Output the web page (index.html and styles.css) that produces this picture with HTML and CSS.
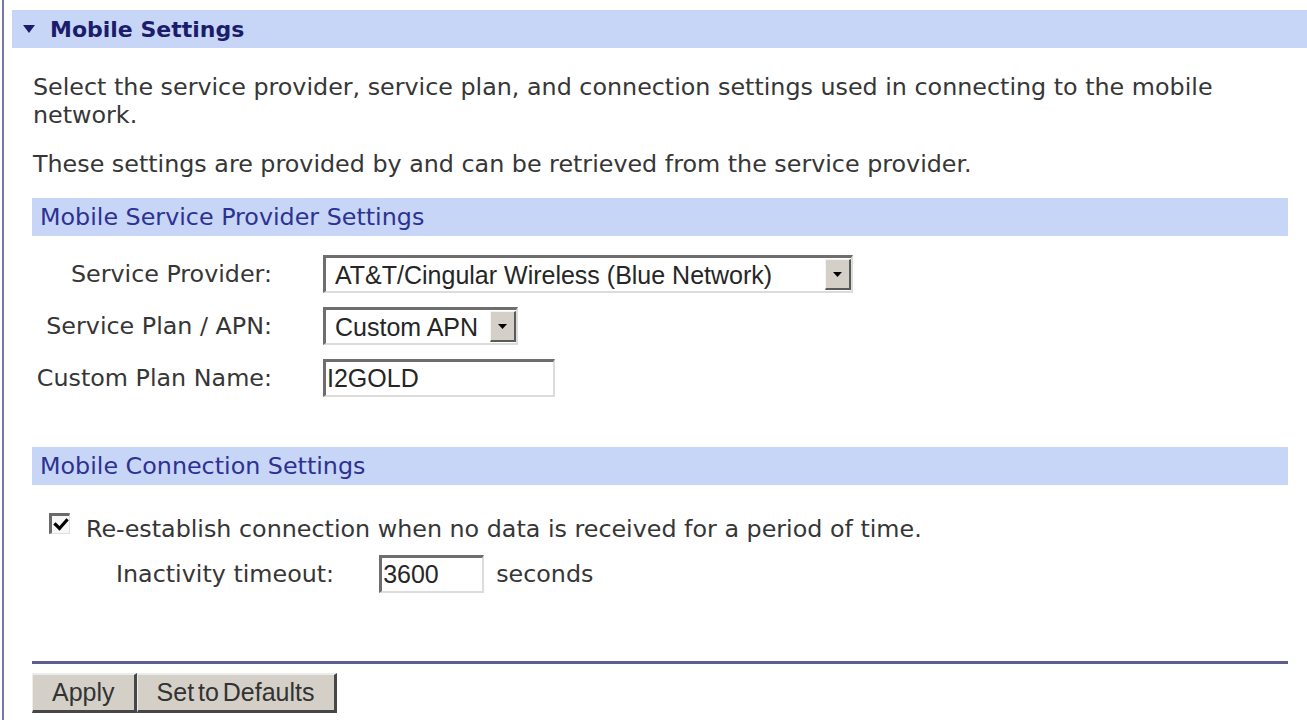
FILE: index.html
```html
<!DOCTYPE html>
<html lang="en">
<head>
<meta charset="utf-8">
<title>Mobile Settings</title>
<link rel="stylesheet" href="styles.css">
</head>
<body>
<div class="frame">
  <div class="titlebar">
    <svg class="caret" width="12" height="8" viewBox="0 0 12 8" aria-hidden="true"><polygon points="0,0 12,0 6,8" fill="#1c1c6c"/></svg>
    <span>Mobile Settings</span>
  </div>
  <div class="content">
    <p class="intro">Select the service provider, service plan, and connection settings used in connecting to the mobile network.</p>
    <p class="note">These settings are provided by and can be retrieved from the service provider.</p>

    <div class="section-head">Mobile Service Provider Settings</div>
    <div class="form-grid">
      <label for="provider">Service Provider:</label>
      <div class="field-select w-provider">
        <select id="provider"><option>AT&amp;T/Cingular Wireless (Blue Network)</option></select>
        <span class="dd-btn"><svg width="9" height="5" viewBox="0 0 9 5" aria-hidden="true"><polygon points="0,0 9,0 4.5,5" fill="#000"/></svg></span>
      </div>
      <label for="plan">Service Plan / APN:</label>
      <div class="field-select w-plan">
        <select id="plan"><option>Custom APN</option></select>
        <span class="dd-btn"><svg width="9" height="5" viewBox="0 0 9 5" aria-hidden="true"><polygon points="0,0 9,0 4.5,5" fill="#000"/></svg></span>
      </div>
      <label for="planname">Custom Plan Name:</label>
      <input id="planname" class="field-text w-name" type="text" value="I2GOLD">
    </div>

    <div class="section-head">Mobile Connection Settings</div>
    <div class="check-row">
      <span class="cb"><svg width="16" height="14" viewBox="0 0 16 14" aria-hidden="true"><path d="M2.5 6.5 L6.5 10.5 L13.5 2.5" fill="none" stroke="#000" stroke-width="3.2" stroke-linecap="square"/></svg></span>
      <span>Re-establish connection when no data is received for a period of time.</span>
    </div>
    <div class="timeout-row">
      <label for="timeout">Inactivity timeout:</label>
      <input id="timeout" class="field-text w-timeout" type="text" value="3600">
      <span class="unit">seconds</span>
    </div>

    <div class="rule"></div>
    <div class="buttons">
      <button class="btn" type="button">Apply</button>
      <button class="btn btn-defaults" type="button">Set to Defaults</button>
    </div>
  </div>
</div>
</body>
</html>
```
FILE: styles.css
```css
body {
  margin: 0;
  background: #ffffff;
  font-family: "DejaVu Sans", Verdana, sans-serif;
  color: #363636;
}

.frame {
  margin-left: 2px;
  border-left: 2px solid #7578a9;
  padding: 10px 0 0 8px;
  min-height: 720px;
  box-sizing: border-box;
}

.titlebar {
  display: flex;
  align-items: center;
  gap: 15px;
  height: 38px;
  padding-left: 11px;
  background: #c7d6f6;
  color: #1c1c6c;
  font-weight: bold;
  font-size: 22px;
}

.caret {
  flex: none;
}

.content {
  padding: 0 19px 0 20px;
  font-size: 23.8px;
  line-height: 28px;
}

.intro {
  margin: 25px 0 21px 1px;
}

.note {
  margin: 0 0 20px 1px;
}

.section-head {
  background: #c7d6f6;
  color: #2e3192;
  padding: 5px 8px;
  line-height: 28px;
}

.form-grid {
  display: grid;
  grid-template-columns: 240px auto;
  column-gap: 51px;
  row-gap: 14px;
  align-items: center;
  justify-items: start;
  margin: 19px 0 50px;
}

.form-grid label {
  justify-self: end;
}

.field-select {
  display: flex;
  height: 38px;
  box-sizing: border-box;
  border-style: solid;
  border-width: 3px 2px 2px 3px;
  border-color: #6e6e6e #dcdcdc #dcdcdc #6e6e6e;
  background: #ffffff;
}

.field-select select {
  appearance: none;
  -webkit-appearance: none;
  flex: 1;
  min-width: 0;
  border: 0;
  background: transparent;
  font: 25px "Liberation Sans", Arial, sans-serif;
  color: #262626;
  padding: 0 0 0 9px;
  margin: 0;
  outline: none;
}

.w-provider {
  width: 530px;
}

.w-plan {
  width: 195px;
}

.dd-btn {
  flex: none;
  width: 26px;
  margin: 1px 0;
  box-sizing: border-box;
  display: flex;
  align-items: center;
  justify-content: center;
  background: #d4d0c8;
  border-style: solid;
  border-width: 1px 2px 2px 1px;
  border-color: #f4f4f4 #5a5a5a #5a5a5a #f4f4f4;
}

.field-text {
  height: 38px;
  box-sizing: border-box;
  border-style: solid;
  border-width: 3px 2px 2px 3px;
  border-color: #6e6e6e #dcdcdc #dcdcdc #6e6e6e;
  background: #ffffff;
  font: 25px "Liberation Sans", Arial, sans-serif;
  color: #262626;
  padding: 0 0 0 1px;
  margin: 0;
  outline: none;
}

.w-name {
  width: 232px;
}

.w-timeout {
  width: 105px;
  margin-left: 45px;
}

.check-row {
  display: flex;
  align-items: center;
  gap: 16px;
  padding-left: 17px;
  margin-top: 28px;
}

.cb {
  flex: none;
  width: 21px;
  height: 21px;
  box-sizing: border-box;
  display: flex;
  align-items: center;
  justify-content: center;
  background: #f7f7f7;
  border-style: solid;
  border-width: 3px 1px 1px 3px;
  border-color: #6a6a6a #e0e0e0 #e0e0e0 #6a6a6a;
  margin-bottom: 10px;
}

.timeout-row {
  display: flex;
  align-items: center;
  padding-left: 84px;
  margin-top: 11px;
}

.unit {
  margin-left: 12px;
}

.rule {
  margin-top: 68px;
  border-top: 3px solid #5e5e8e;
}

.buttons {
  display: flex;
  margin-top: 9px;
}

.btn {
  height: 40px;
  padding: 0 19px;
  margin: 0;
  font: 25px "Liberation Sans", Arial, sans-serif;
  color: #333333;
  background: #d4d0c8;
  border-style: solid;
  border-width: 2px 3px 3px 1px;
  border-color: #ececec #474747 #474747 #ececec;
  cursor: pointer;
}

.btn-defaults {
  word-spacing: -3px;
}
```
